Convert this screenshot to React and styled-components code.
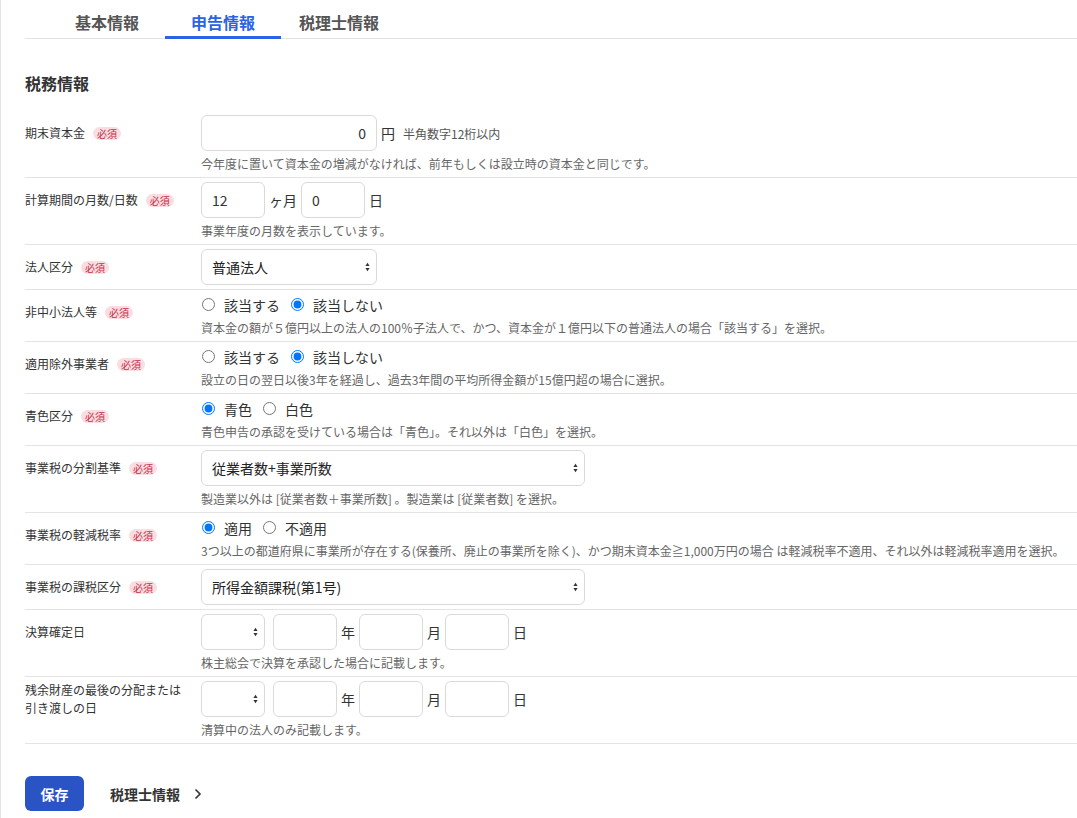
import React from "react";
import styled, { createGlobalStyle } from "styled-components";

const GlobalStyle = createGlobalStyle`
  html, body { margin: 0; padding: 0; background: #fff; }
  body {
    font-family: "Noto Sans CJK JP", "Noto Sans", "Liberation Sans", sans-serif;
    color: #333;
    -webkit-font-smoothing: antialiased;
  }
  * { box-sizing: border-box; }
`;

const Page = styled.div`
  min-height: 818px;
  border-left: 1px solid #e4e4e4;
  padding-left: 24px;
`;

const TabBar = styled.div`
  display: flex;
  padding-left: 24px;
  border-bottom: 1px solid #e4e4e4;
`;

const Tab = styled.div`
  width: 116px;
  text-align: center;
  font-size: 16px;
  font-weight: 700;
  line-height: 22px;
  padding: 11px 0 3px;
  margin-bottom: -1px;
  color: ${(p) => (p.$active ? "#2b63e3" : "#555")};
  border-bottom: 3px solid ${(p) => (p.$active ? "#2b63e3" : "transparent")};
`;

const SectionTitle = styled.h2`
  margin: 35px 0 19px;
  font-size: 16px;
  line-height: 18px;
  font-weight: 700;
  color: #333;
`;

const Form = styled.div`
  display: flex;
  flex-direction: column;
`;

const Row = styled.div`
  display: grid;
  grid-template-columns: 176px 1fr;
  align-items: start;
  padding: 4px 0 4px;
  border-bottom: 1px solid #e4e4e4;
`;

const Label = styled.div`
  min-height: 36px;
  display: flex;
  align-items: center;
  font-size: 12px;
  line-height: 18px;
  color: #333;
  padding-right: 16px;
`;

const Required = styled.span`
  display: inline-block;
  margin-left: 8px;
  padding: 0 4px;
  height: 13px;
  line-height: 13px;
  font-size: 10px;
  border-radius: 7px;
  background: #fbdce1;
  color: #c43048;
  white-space: nowrap;
  flex: none;
`;

const Field = styled.div`
  display: flex;
  flex-direction: column;
  align-items: flex-start;
`;

const ControlLine = styled.div`
  display: flex;
  align-items: center;
  gap: 4px;
  min-height: 36px;
`;

const TextInput = styled.input`
  width: ${(p) => p.$w}px;
  height: 36px;
  border: 1px solid #dadada;
  border-radius: 6px;
  padding: 0 10px;
  font-family: inherit;
  font-size: 14px;
  color: #333;
  text-align: ${(p) => p.$align || "left"};
  background: #fff;
  outline: none;
`;

const Unit = styled.span`
  font-size: 14px;
  color: #333;
  line-height: 20px;
`;

const InlineNote = styled.span`
  margin-left: 4px;
  font-size: 12px;
  color: #555;
`;

const Help = styled.div`
  margin-top: 3px;
  font-size: 12px;
  line-height: 19px;
  color: #666;
  white-space: nowrap;
`;

const SelectWrap = styled.div`
  position: relative;
  width: ${(p) => p.$w}px;
  height: 36px;
  margin-right: ${(p) => p.$gap || 0}px;
  flex: none;
`;

const Select = styled.select`
  appearance: none;
  -webkit-appearance: none;
  width: 100%;
  height: 36px;
  border: 1px solid #dadada;
  border-radius: 6px;
  padding: 0 24px 0 10px;
  font-family: inherit;
  font-size: 14px;
  color: #222;
  background: #fff;
  outline: none;
`;

const ArrowIcon = styled.svg`
  position: absolute;
  right: 7px;
  top: 50%;
  transform: translateY(-50%);
  pointer-events: none;
`;

const RadioGroup = styled.div`
  display: flex;
  align-items: center;
  gap: 10px;
  height: 21px;
`;

const RadioOption = styled.label`
  display: flex;
  align-items: center;
  gap: 9px;
  font-size: 14px;
  color: #333;
`;

const Radio = styled.input`
  margin: 0 0 0 1px;
  width: 13px;
  height: 13px;
`;

const Footer = styled.div`
  display: flex;
  align-items: center;
  gap: 26px;
  padding-top: 32px;
`;

const SaveButton = styled.button`
  width: 59px;
  height: 35px;
  border: none;
  border-radius: 6px;
  background: #2a54c5;
  color: #fff;
  font-family: inherit;
  font-size: 14px;
  font-weight: 700;
`;

const NextLink = styled.a`
  display: flex;
  align-items: center;
  gap: 14px;
  font-size: 14px;
  font-weight: 700;
  color: #333;
  text-decoration: none;
`;

const SelectArrow = () => (
  <ArrowIcon width="5" height="10" viewBox="0 0 5 10">
    <path d="M2.5 0.8 L4.6 4 L0.4 4 Z" fill="#333" />
    <path d="M2.5 9.2 L4.6 6 L0.4 6 Z" fill="#333" />
  </ArrowIcon>
);

const SelectBox = ({ w, gap, value, options = [] }) => (
  <SelectWrap $w={w} $gap={gap}>
    <Select defaultValue={value}>
      {options.map((o) => (
        <option key={o} value={o}>
          {o}
        </option>
      ))}
    </Select>
    <SelectArrow />
  </SelectWrap>
);

const RadioSet = ({ name, options, checked }) => (
  <RadioGroup>
    {options.map((o) => (
      <RadioOption key={o}>
        <Radio type="radio" name={name} defaultChecked={o === checked} />
        {o}
      </RadioOption>
    ))}
  </RadioGroup>
);

const FormRow = ({ label, required, children, help }) => (
  <Row>
    <Label>
      <span>{label}</span>
      {required && <Required>必須</Required>}
    </Label>
    <Field>
      {children}
      {help && <Help>{help}</Help>}
    </Field>
  </Row>
);

const DateLine = () => (
  <ControlLine>
    <SelectBox w={64} gap={4} value="" options={[""]} />
    <TextInput $w={64} defaultValue="" />
    <Unit>年</Unit>
    <TextInput $w={64} defaultValue="" />
    <Unit>月</Unit>
    <TextInput $w={64} defaultValue="" />
    <Unit>日</Unit>
  </ControlLine>
);

export default function App() {
  return (
    <>
      <GlobalStyle />
      <Page>
        <TabBar>
          <Tab>基本情報</Tab>
          <Tab $active>申告情報</Tab>
          <Tab>税理士情報</Tab>
        </TabBar>

        <SectionTitle>税務情報</SectionTitle>

        <Form>
          <FormRow
            label="期末資本金"
            required
            help="今年度に置いて資本金の増減がなければ、前年もしくは設立時の資本金と同じです。"
          >
            <ControlLine>
              <TextInput $w={176} $align="right" defaultValue="0" />
              <Unit>円</Unit>
              <InlineNote>半角数字12桁以内</InlineNote>
            </ControlLine>
          </FormRow>

          <FormRow label="計算期間の月数/日数" required help="事業年度の月数を表示しています。">
            <ControlLine>
              <TextInput $w={64} defaultValue="12" />
              <Unit>ヶ月</Unit>
              <TextInput $w={64} defaultValue="0" />
              <Unit>日</Unit>
            </ControlLine>
          </FormRow>

          <FormRow label="法人区分" required>
            <ControlLine>
              <SelectBox w={176} value="普通法人" options={["普通法人"]} />
            </ControlLine>
          </FormRow>

          <FormRow
            label="非中小法人等"
            required
            help="資本金の額が５億円以上の法人の100％子法人で、かつ、資本金が１億円以下の普通法人の場合「該当する」を選択。"
          >
            <RadioSet name="r1" options={["該当する", "該当しない"]} checked="該当しない" />
          </FormRow>

          <FormRow
            label="適用除外事業者"
            required
            help="設立の日の翌日以後3年を経過し、過去3年間の平均所得金額が15億円超の場合に選択。"
          >
            <RadioSet name="r2" options={["該当する", "該当しない"]} checked="該当しない" />
          </FormRow>

          <FormRow
            label="青色区分"
            required
            help="青色申告の承認を受けている場合は「青色」。それ以外は「白色」を選択。"
          >
            <RadioSet name="r3" options={["青色", "白色"]} checked="青色" />
          </FormRow>

          <FormRow
            label="事業税の分割基準"
            required
            help="製造業以外は [従業者数＋事業所数] 。製造業は [従業者数] を選択。"
          >
            <ControlLine>
              <SelectBox w={384} value="従業者数+事業所数" options={["従業者数+事業所数"]} />
            </ControlLine>
          </FormRow>

          <FormRow
            label="事業税の軽減税率"
            required
            help="3つ以上の都道府県に事業所が存在する(保養所、廃止の事業所を除く)、かつ期末資本金≧1,000万円の場合 は軽減税率不適用、それ以外は軽減税率適用を選択。"
          >
            <RadioSet name="r4" options={["適用", "不適用"]} checked="適用" />
          </FormRow>

          <FormRow label="事業税の課税区分" required>
            <ControlLine>
              <SelectBox w={384} value="所得金額課税(第1号)" options={["所得金額課税(第1号)"]} />
            </ControlLine>
          </FormRow>

          <FormRow label="決算確定日" help="株主総会で決算を承認した場合に記載します。">
            <DateLine />
          </FormRow>

          <FormRow label="残余財産の最後の分配または引き渡しの日" help="清算中の法人のみ記載します。">
            <DateLine />
          </FormRow>
        </Form>

        <Footer>
          <SaveButton>保存</SaveButton>
          <NextLink href="#">
            税理士情報
            <svg width="8" height="12" viewBox="0 0 8 12">
              <path d="M1.5 1.5 L6 6 L1.5 10.5" fill="none" stroke="#333" strokeWidth="1.6" />
            </svg>
          </NextLink>
        </Footer>
      </Page>
    </>
  );
}
